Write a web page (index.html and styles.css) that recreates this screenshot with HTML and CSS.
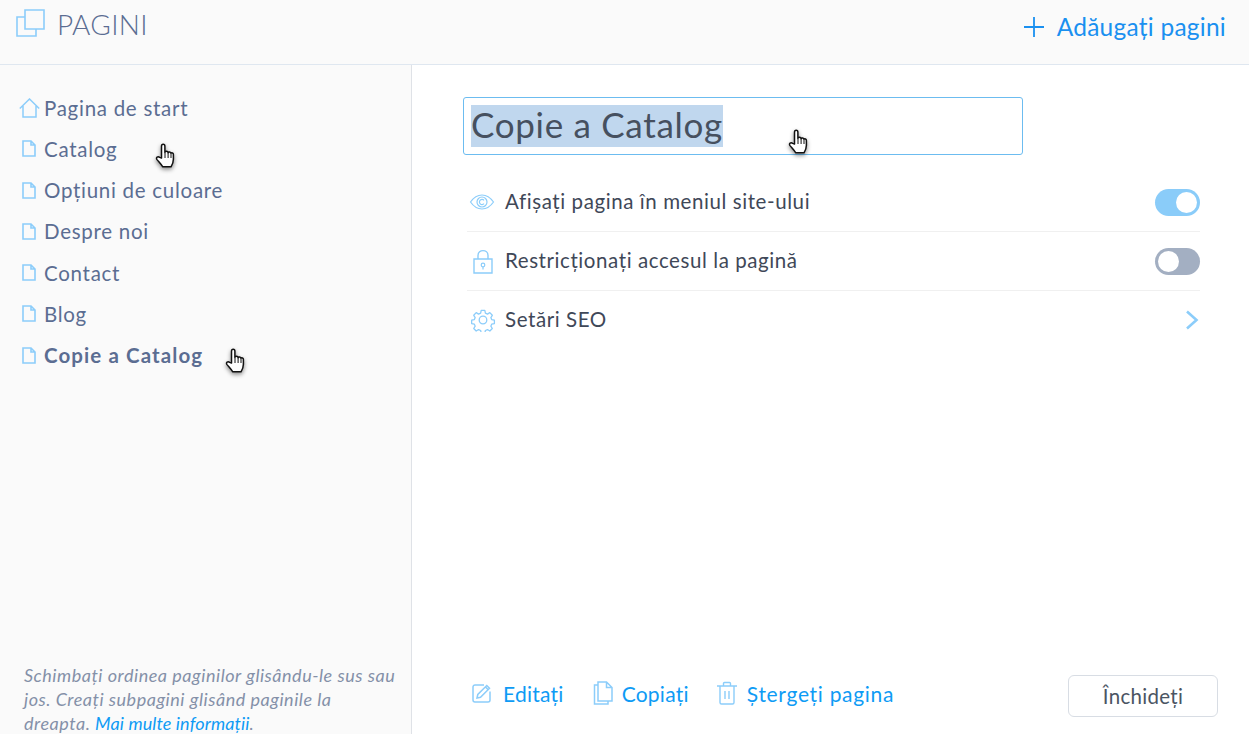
FILE: index.html
```html
<!DOCTYPE html>
<html lang="ro">
<head>
<meta charset="utf-8">
<title>Pagini</title>
<link rel="stylesheet" href="styles.css">
</head>
<body>
<svg class="defs" width="0" height="0" aria-hidden="true">
  <defs>
    <symbol id="hand" viewBox="0 0 20 26">
      <path d="M6.500 15V3.200c0-2.600 3.400-2.600 3.400 0v6.200c.3-1.500 3-1.400 3.200.3.4-1.200 2.700-1 2.900.6.600-.8 2.400-.5 2.400 1.100v4.800c0 3.600-1.600 6.300-2.400 7.600H7.800c-1.500-2.300-3.600-4.500-5.800-7.200-1.600-2.200 1-3.700 2.600-2.200z" fill="#fff" stroke="#111" stroke-width="1.500" stroke-linejoin="round"/>
      <path d="M10 10v5M13.100 10v5M16 11v4" fill="none" stroke="#111" stroke-width="1"/>
    </symbol>
    <symbol id="page" viewBox="0 0 14 17">
      <path d="M1 1h8l4 4v11H1zM9 1v4h4" fill="none" stroke="#8ccdfa" stroke-width="1.600"/>
    </symbol>
  </defs>
</svg>
<div class="app">
  <header class="topbar">
    <div class="brand">
      <svg class="brand-icon" width="29" height="28" viewBox="0 0 29 28"><path d="M9 1h19v19H9z M9 8H1v19h19v-7" fill="none" stroke="#8ccdfa" stroke-width="1.600"/></svg>
      <span class="brand-title">PAGINI</span>
    </div>
    <a class="add-page">
      <svg width="20" height="20" viewBox="0 0 20 20"><path d="M10 0v20M0 10h20" stroke="#1a90f0" stroke-width="1.800"/></svg>
      <span>Adăugați pagini</span>
    </a>
  </header>
  <main class="content">
    <aside class="sidebar">
      <ul class="page-list">
        <li class="page-item">
          <svg class="home-icon" width="21" height="20" viewBox="0 0 21 20"><path d="M.8 10.500 10.500 1l9.700 9.500M4 8v11h13V8" fill="none" stroke="#8ccdfa" stroke-width="1.500"/></svg>
          Pagina de start
        </li>
        <li class="page-item"><svg class="page-icon"><use href="#page"/></svg>Catalog<svg class="hand hand-catalog"><use href="#hand"/></svg></li>
        <li class="page-item"><svg class="page-icon"><use href="#page"/></svg>Opțiuni de culoare</li>
        <li class="page-item"><svg class="page-icon"><use href="#page"/></svg>Despre noi</li>
        <li class="page-item"><svg class="page-icon"><use href="#page"/></svg>Contact</li>
        <li class="page-item"><svg class="page-icon"><use href="#page"/></svg>Blog</li>
        <li class="page-item is-active"><svg class="page-icon"><use href="#page"/></svg>Copie a Catalog<svg class="hand hand-copy"><use href="#hand"/></svg></li>
      </ul>
      <p class="hint">Schimbați ordinea paginilor glisându-le sus sau jos. Creați subpagini glisând paginile la dreapta. <a class="hint-link">Mai multe informații</a>.</p>
    </aside>
    <section class="details">
      <div class="title-field">
        <span class="title-text">Copie a Catalog</span>
        <svg class="hand hand-title"><use href="#hand"/></svg>
      </div>
      <div class="settings">
        <div class="setting">
          <svg class="setting-icon eye-icon" width="26" height="20" viewBox="0 0 26 20"><path d="M1.500 10C5 5 9 3 13 3s8 2 11.500 7C21 15 17 17 13 17S5 15 1.500 10z" fill="none" stroke="#8ccdfa" stroke-width="1.200"/><circle cx="13" cy="10" r="5" fill="none" stroke="#8ccdfa" stroke-width="1.200"/><path d="M15 8.300A2.600 2.600 0 1 0 15 11.700" fill="none" stroke="#8ccdfa" stroke-width="1.200"/></svg>
          <span class="setting-label">Afișați pagina în meniul site-ului</span>
          <span class="toggle is-on"><span class="knob"></span></span>
        </div>
        <div class="setting">
          <svg class="setting-icon" width="26" height="25" viewBox="0 0 26 25"><path d="M4 10h18v14H4zM8 10V6.500C8 0 18 0 18 6.500V10" fill="none" stroke="#8ccdfa" stroke-width="1.400"/><circle cx="13" cy="16" r="1.800" fill="none" stroke="#8ccdfa" stroke-width="1.200"/><path d="M13 18v2.500" stroke="#8ccdfa" stroke-width="1.200"/></svg>
          <span class="setting-label">Restricționați accesul la pagină</span>
          <span class="toggle"><span class="knob"></span></span>
        </div>
        <div class="setting">
          <svg class="setting-icon" width="26" height="24" viewBox="0 0 24 24"><circle cx="12" cy="12" r="3.800" fill="none" stroke="#8ccdfa" stroke-width="1.300"/><path d="M10 1.500h4l.6 3 2.300 1 2.600-1.600 2.700 2.900-1.600 2.500.9 2.200 3 .6v3.800l-3 .6-.9 2.300 1.600 2.500-2.700 2.800-2.600-1.600-2.300 1-.6 3h-4l-.6-3-2.300-1-2.600 1.600-2.700-2.800 1.600-2.500-.9-2.300-3-.6v-3.800l3-.6.9-2.200L1.800 6.800l2.700-2.900 2.600 1.600 2.300-1z" transform="translate(1.100 1.100) scale(.91)" fill="none" stroke="#8ccdfa" stroke-width="1.400" stroke-linejoin="round"/></svg>
          <span class="setting-label">Setări SEO</span>
          <svg class="chevron" width="14" height="20" viewBox="0 0 14 20"><path d="M2 1.500l9.500 8.500L2 18.500" fill="none" stroke="#8ccdfa" stroke-width="2.600"/></svg>
        </div>
      </div>
      <footer class="actions">
        <a class="action action-edit">
          <svg width="21" height="20" viewBox="0 0 21 20"><path d="M12 2.500H3A2 2 0 0 0 1 4.500v13a2 2 0 0 0 2 2h13a2 2 0 0 0 2-2V9" fill="none" stroke="#8ccdfa" stroke-width="1.500" transform="translate(0 -.500)"/><path d="M5 15l.8-3.500 9-9 2.700 2.700-9 9zM13.500 4l2.700 2.700" fill="none" stroke="#8ccdfa" stroke-width="1.500"/></svg>
          Editați
        </a>
        <a class="action action-copy">
          <svg width="20" height="24" viewBox="0 0 20 24"><path d="M5 1h8.500L19 6.500V20H5zM13.500 1v5.500H19M5 4H1.500v19H15v-3" fill="none" stroke="#8ccdfa" stroke-width="1.500"/></svg>
          Copiați
        </a>
        <a class="action action-delete">
          <svg width="20" height="24" viewBox="0 0 20 24"><path d="M0 5h20M6.500 5V2.500a1 1 0 0 1 1-1h5a1 1 0 0 1 1 1V5M3 5v16.500a1.500 1.500 0 0 0 1.500 1.500h11a1.500 1.500 0 0 0 1.500-1.500V5M8 10v8M12 10v8" fill="none" stroke="#8ccdfa" stroke-width="1.400"/></svg>
          Ștergeți pagina
        </a>
        <button class="close-btn" type="button">Închideți</button>
      </footer>
    </section>
  </main>
</div>
</body>
</html>
```
FILE: styles.css
```css
* { box-sizing: border-box; }
html, body { margin: 0; height: 100%; overflow: hidden; }
body { font-family: "Lato", "Noto Sans", sans-serif; background: #fff; color: #3f4858; }
.defs { position: absolute; }
.app { height: 734px; display: flex; flex-direction: column; overflow: hidden; }

.topbar { height: 65px; flex: none; display: flex; justify-content: space-between; background: #fafafa; border-bottom: 1px solid #dfe7f0; padding: 0 23px 0 16px; }
.brand { display: flex; align-items: flex-start; padding-top: 9px; gap: 12px; }
.brand-title { font-size: 28px; font-weight: 300; line-height: 30px; color: #5b6d92; letter-spacing: .3px; }
.add-page { display: flex; align-items: center; gap: 13px; font-size: 24.5px; color: #1a90f0; height: 53px; letter-spacing: .25px; }

.content { flex: 1; display: flex; min-height: 0; }
.sidebar { width: 412px; flex: none; background: #fafafa; border-right: 1px solid #dfe2e7; padding: 22px 12px 0 19px; display: flex; flex-direction: column; justify-content: space-between; overflow: hidden; }
.page-list { list-style: none; margin: 0; padding: 0; }
.page-item { position: relative; height: 41.25px; display: flex; align-items: center; font-size: 20.5px; color: #5b6d92; letter-spacing: .72px; }
.page-item.is-active { font-weight: 700; letter-spacing: 1.1px; }
.home-icon { margin-right: 4px; flex: none; }
.page-icon { width: 14px; height: 17px; margin: 0 8px 0 3px; flex: none; }

.hand { position: absolute; width: 20px; height: 26px; filter: drop-shadow(0 2px 2px rgba(0,0,0,.45)); }
.hand-catalog { left: 136px; top: 15px; }
.hand-copy { left: 206px; top: 13px; }
.hand-title { left: 324px; top: 31px; }

.hint { margin: 0 0 -1px 5px; font-size: 18px; line-height: 24px; font-style: italic; color: #8490a8; letter-spacing: .52px; }
.hint-link { color: #0e9bf5; letter-spacing: .12px; }

.details { flex: 1; min-width: 0; padding: 32px 49px 0 51px; display: flex; flex-direction: column; position: relative; }
.title-field { position: relative; width: 560px; height: 58px; flex: none; border: 1px solid #6cbcf0; border-radius: 3px; padding: 7px; }
.title-text { display: inline-block; background: #c0d7ee; font-size: 35px; line-height: 38px; padding-bottom: 4px; color: #46505f; letter-spacing: .7px; }

.settings { margin: 18px 0 0 4px; }
.setting { height: 59px; display: flex; align-items: center; border-bottom: 1px solid #f0f0f0; }
.setting:last-child { border-bottom-color: transparent; }
.setting-icon { width: 26px; flex: none; margin-left: 3px; }
.eye-icon { margin-left: 2px; margin-right: 1px; }
.setting-label { flex: 1; margin-left: 9px; padding-bottom: 2px; font-size: 20.5px; color: #3f4858; letter-spacing: .58px; }
.toggle { width: 45px; height: 27px; border-radius: 14px; background: #a3afc2; padding: 3px; display: flex; flex: none; }
.toggle.is-on { background: #8accf9; justify-content: flex-end; }
.knob { width: 21px; height: 21px; border-radius: 50%; background: #fff; }
.chevron { flex: none; margin-right: 1px; }

.actions { margin-top: auto; height: 84px; display: flex; align-items: flex-start; padding-top: 22px; font-size: 21px; color: #0e9bf5; }
.action { display: flex; align-items: center; height: 42px; gap: 10px; letter-spacing: .25px; }
.action-edit { margin-left: 9px; }
.action-copy { margin-left: 29px; gap: 9px; }
.action-delete { margin-left: 28px; letter-spacing: .7px; }
.close-btn { margin: 3px -18px 0 auto; width: 150px; height: 42px; background: #fff; border: 1px solid #d8dde4; border-radius: 6px; font: inherit; font-size: 20.5px; color: #4b5563; letter-spacing: .3px; }
```
